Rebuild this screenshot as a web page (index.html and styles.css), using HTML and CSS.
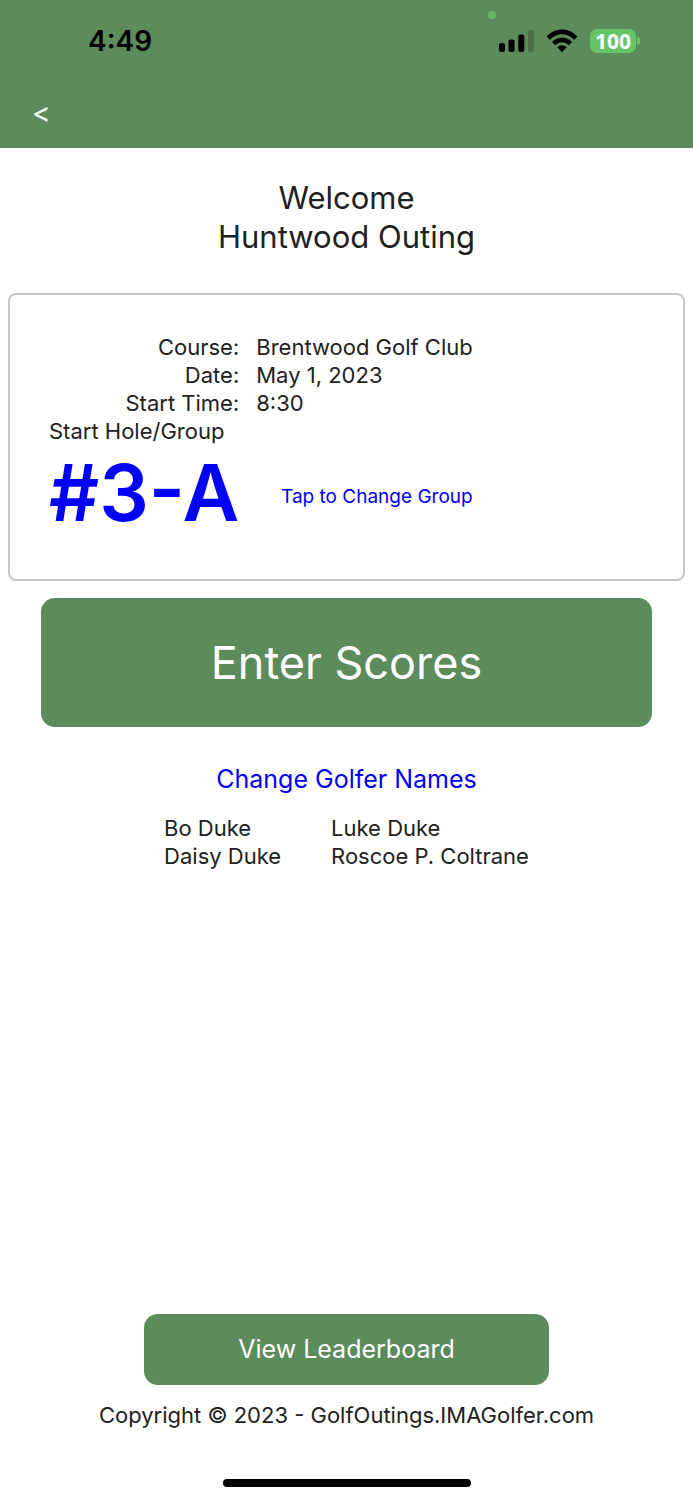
FILE: index.html
```html
<!DOCTYPE html>
<html lang="en">
<head>
    <meta charset="UTF-8">
    <meta name="viewport" content="width=device-width, initial-scale=1.0">
    <title>Huntwood Outing</title>
    <link rel="stylesheet" href="styles.css">
</head>
<body>
    <header>
        <div class="status-bar">
            <span class="time">4:49</span>
            <div class="status-icons">
                <span class="camera-dot"></span>
                <svg class="signal" width="36" height="24" viewBox="0 0 36 24">
                    <rect x="0" y="14" width="6" height="9" rx="2"/>
                    <rect x="9.500" y="10.500" width="6" height="12.500" rx="2"/>
                    <rect x="19.300" y="5.500" width="6" height="17.500" rx="2"/>
                    <rect x="29" y="1" width="6" height="22" rx="2" opacity=".2"/>
                </svg>
                <svg class="wifi" width="32" height="24" viewBox="0 0 32 24">
                    <path d="M.6 7.600C9-1.900 23-1.900 31.400 7.600L28.200 10.800C21.500 3.300 10.500 3.300 3.800 10.800Z"/>
                    <path d="M6 13.100C11.500 7 20.500 7 26 13.100L22.800 16.300C19 12.100 13 12.100 9.200 16.300Z"/>
                    <path d="M11.200 18.300C14 15.600 18 15.600 20.800 18.300L16 23.200Z"/>
                </svg>
                <span class="battery">100</span>
            </div>
        </div>
        <nav>
            <a href="#" class="back" aria-label="Back">&lt;</a>
        </nav>
    </header>

    <main>
        <h1>Welcome<br>Huntwood Outing</h1>

        <div class="outing">
            <table>
                <tr>
                    <th>Course:</th>
                    <td>Brentwood Golf Club</td>
                </tr>
                <tr>
                    <th>Date:</th>
                    <td>May 1, 2023</td>
                </tr>
                <tr>
                    <th>Start Time:</th>
                    <td>8:30</td>
                </tr>
                <tr>
                    <th class="left">Start Hole/Group</th>
                    <td></td>
                </tr>
                <tr>
                    <td class="group"><a href="#">#3-A</a></td>
                    <td class="change-group"><a href="#">Tap to Change Group</a></td>
                </tr>
            </table>
        </div>

        <button type="button" class="enter-scores">Enter Scores</button>

        <a href="#" class="change-names">Change Golfer Names</a>
        <ul class="golfers">
            <li>Bo Duke</li>
            <li>Luke Duke</li>
            <li>Daisy Duke</li>
            <li>Roscoe P. Coltrane</li>
        </ul>
    </main>

    <footer>
        <button type="button" class="leaderboard">View Leaderboard</button>
        <p>Copyright © 2023 - GolfOutings.IMAGolfer.com</p>
        <div class="home-indicator"></div>
    </footer>
</body>
</html>
```

FILE: styles.css
```css
* {
    box-sizing: border-box;
}
body {
    margin: 0;
    min-height: 100vh;
    display: flex;
    flex-direction: column;
    font-family: Inter, "Liberation Sans", sans-serif;
    font-size: 22px;
    line-height: 28px;
    color: #212121;
    background-color: #ffffff;
}
a {
    color: #0000fa;
    text-decoration: none;
}
button {
    border: none;
    border-radius: 14px;
    background-color: #5c8b5c;
    color: #ffffff;
    font-family: inherit;
    cursor: pointer;
}

header {
    height: 148px;
    background-color: #5c8b5c;
}
.status-bar {
    display: flex;
    align-items: center;
    justify-content: space-between;
    height: 82px;
    padding: 0 57px 0 88px;
    color: #000000;
}
.time {
    font-size: 28px;
    font-weight: 600;
}
.status-icons {
    display: flex;
    align-items: center;
    position: relative;
}
.camera-dot {
    position: absolute;
    top: -18px;
    left: -11px;
    width: 8px;
    height: 8px;
    border-radius: 50%;
    background-color: #62ba67;
}
.signal {
    margin-right: 11px;
}
.wifi {
    margin-right: 12px;
}
.battery {
    position: relative;
    width: 46px;
    height: 24px;
    border-radius: 7px;
    background-color: #65c466;
    color: #ffffff;
    font-family: "Noto Sans", sans-serif;
    font-size: 21px;
    font-weight: 700;
    line-height: 24px;
    text-align: center;
}
.battery::after {
    content: "";
    position: absolute;
    top: 8px;
    right: -4px;
    width: 3px;
    height: 8px;
    border-radius: 0 4px 4px 0;
    background-color: #65c466;
}
nav {
    padding: 17px 32px;
}
.back {
    color: #ffffff;
    font-size: 28px;
}

main {
    flex: 1;
    display: flex;
    flex-direction: column;
}
h1 {
    margin: 30px 0 37px;
    font-size: 31px;
    font-weight: 400;
    line-height: 39px;
    text-align: center;
}
.outing {
    margin: 0 8px;
    padding: 38px 39px;
    border: 2px solid #c8c8c8;
    border-radius: 8px;
}
table {
    border-collapse: collapse;
}
th,
td {
    padding: 0;
    font-weight: 400;
    text-align: left;
}
th {
    text-align: right;
}
th.left {
    text-align: left;
}
td + td,
th + td {
    padding-left: 17px;
}
.group {
    font-size: 78px;
    font-weight: 600;
    line-height: 96px;
}
.change-group {
    padding-top: 8px;
    font-size: 19px;
    text-align: right;
}
.enter-scores {
    margin: 17px 41px 38px;
    padding: 36px;
    font-size: 45px;
    line-height: 57px;
}
.change-names {
    align-self: center;
    font-size: 25px;
}
.golfers {
    display: grid;
    grid-template-columns: auto auto;
    column-gap: 50px;
    align-self: center;
    margin: 21px 0;
    padding: 0;
    list-style: none;
}

footer {
    display: flex;
    flex-direction: column;
    align-items: center;
    padding-bottom: 13px;
}
.leaderboard {
    padding: 21px 94px;
    font-size: 25px;
    line-height: 29px;
}
footer p {
    margin: 16px 0 50px;
}
.home-indicator {
    width: 248px;
    height: 8px;
    border-radius: 4px;
    background-color: #000000;
}
```
